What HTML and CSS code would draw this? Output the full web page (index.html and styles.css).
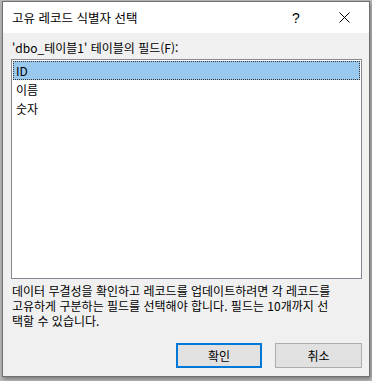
FILE: index.html
```html
<!DOCTYPE html>
<html lang="ko">
<head>
<meta charset="utf-8">
<link rel="stylesheet" href="styles.css">
</head>
<body>
<div class="window">
  <div class="titlebar">
    <span class="title">고유 레코드 식별자 선택</span>
    <span class="help">?</span>
    <span class="close">
      <svg width="11" height="11" viewBox="0 0 11 11"><path d="M0.5 0.5 L10.5 10.5 M10.5 0.5 L0.5 10.5" stroke="#000" stroke-width="1" fill="none"/></svg>
    </span>
  </div>
  <div class="body">
    <div class="label">'dbo_테이블1' 테이블의 필드(F):</div>
    <div class="listbox">
      <div class="item selected">ID</div>
      <div class="item">이름</div>
      <div class="item">숫자</div>
    </div>
    <p class="desc">데이터 무결성을 확인하고 레코드를 업데이트하려면 각 레코드를<br>고유하게 구분하는 필드를 선택해야 합니다. 필드는 10개까지 선<br>택할 수 있습니다.</p>
    <div class="buttons">
      <button class="btn default">확인</button>
      <button class="btn">취소</button>
    </div>
  </div>
</div>
</body>
</html>
```
FILE: styles.css
```css
html, body {
  margin: 0;
  padding: 0;
}
body {
  width: 372px;
  height: 381px;
  background: #b9b9b9;
  font-family: "Noto Sans CJK KR", "Noto Sans", sans-serif;
  font-size: 12px;
  color: #000;
  overflow: hidden;
}
.window {
  box-sizing: border-box;
  margin: 1px 0 0 2px;
  width: 368px;
  height: 376px;
  border: 1px solid #707070;
  background: #f0f0f0;
  display: flex;
  flex-direction: column;
  box-shadow: 1px 2px 4px rgba(0,0,0,0.35);
}
.titlebar {
  height: 31px;
  background: #fff;
  display: flex;
  align-items: center;
  padding-left: 9px;
  flex: none;
}
.title {
  font-size: 12.5px;
  line-height: 16px;
  flex: 1;
}
.help {
  font-family: "Liberation Sans", sans-serif;
  font-size: 14px;
  width: 46px;
  text-align: center;
  margin-right: 2px;
}
.close {
  width: 46px;
  display: flex;
  justify-content: center;
  margin-right: 2px;
}
.close svg {
  display: block;
}
.body {
  flex: 1;
  display: flex;
  flex-direction: column;
  padding: 0 7px 8px 8px;
}
.label {
  margin-top: 7px;
  padding-left: 1px;
  line-height: 15px;
  height: 19px;
}
.listbox {
  box-sizing: border-box;
  height: 220px;
  border: 1px solid #828790;
  background: #fff;
  padding: 1px;
  flex: none;
}
.item {
  box-sizing: border-box;
  height: 19px;
  line-height: 16px;
  padding-top: 1px;
  padding-left: 2px;
  border: 1px solid transparent;
}
.item.selected {
  background: #99c9ef;
  border: 1px dotted #333;
}
.desc {
  margin: 4px 0 0 1px;
  line-height: 15px;
  white-space: nowrap;
}
.buttons {
  margin-top: auto;
  display: flex;
  justify-content: flex-end;
  gap: 13px;
}
.btn {
  box-sizing: border-box;
  height: 25px;
  width: 86px;
  font-family: "Noto Sans CJK KR", sans-serif;
  font-size: 12px;
  line-height: 14px;
  background: #e1e1e1;
  border: 1px solid #adadad;
  padding: 0;
  color: #000;
}
.btn.default {
  border: 2px solid #0078d7;
}
.btn + .btn {
  width: 87px;
}
```
